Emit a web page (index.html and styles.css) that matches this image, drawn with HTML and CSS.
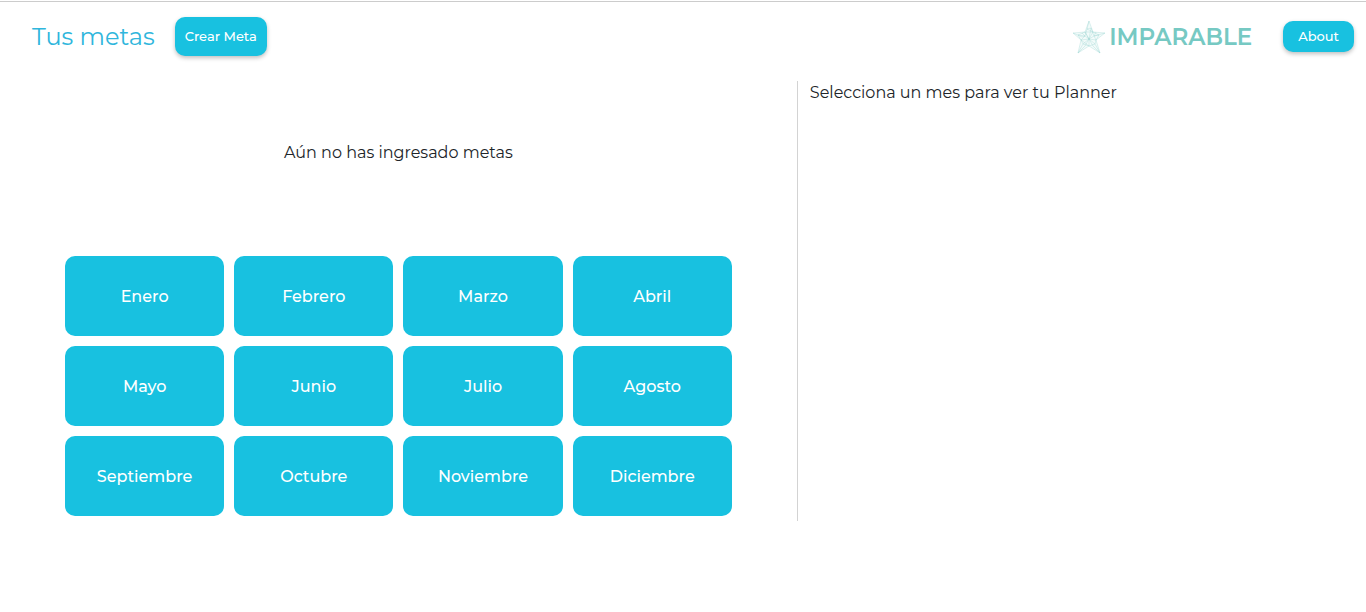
FILE: index.html
```html
<!DOCTYPE html>
<html lang="es">
<head>
<meta charset="utf-8">
<meta name="viewport" content="width=device-width, initial-scale=1">
<title>Tus metas</title>
<link rel="stylesheet" href="styles.css">
</head>
<body>
<header class="topbar">
  <h1 class="title">Tus metas</h1>
  <button class="button button-create" type="button">Crear Meta</button>
  <div class="brand">
    <svg class="brand-star" viewBox="0 0 34 34" aria-hidden="true">
      <path class="star-fill" d="M17 1 21 12 33 13 24 20 28 33 17 26 6 33 9 20 1 13 13 12Z"/>
      <path class="star-mesh" d="M17 1 21 12 33 13 24 20 28 33 17 26 6 33 9 20 1 13 13 12ZM17 1 15 9 21 12 13 12 17 19 21 12 27 15 24 20 17 19 17 26 9 20 17 19 13 12 6 15 9 20M1 13 6 15 13 16 17 19 22 16 33 13M6 33 11 24 17 19 23 24 28 33M11 24 9 20 13 16 15 9 19 8 17 19M11 24 17 26 23 24 24 20 22 16 19 8M6 33 13 26 17 19 21 26 28 33M10 13 13 16 10 17 6 15M27 15 22 16 24 12"/>
    </svg>
    <span class="brand-name">IMPARABLE</span>
  </div>
  <button class="button button-about" type="button">About</button>
</header>
<main class="board">
  <section class="goals">
    <p class="empty">Aún no has ingresado metas</p>
    <div class="months">
      <button class="month" type="button">Enero</button>
      <button class="month" type="button">Febrero</button>
      <button class="month" type="button">Marzo</button>
      <button class="month" type="button">Abril</button>
      <button class="month" type="button">Mayo</button>
      <button class="month" type="button">Junio</button>
      <button class="month" type="button">Julio</button>
      <button class="month" type="button">Agosto</button>
      <button class="month" type="button">Septiembre</button>
      <button class="month" type="button">Octubre</button>
      <button class="month" type="button">Noviembre</button>
      <button class="month" type="button">Diciembre</button>
    </div>
  </section>
  <section class="planner">
    <p class="hint">Selecciona un mes para ver tu Planner</p>
  </section>
</main>
</body>
</html>
```
FILE: styles.css
```css
* {
  box-sizing: border-box;
}

body {
  margin: 0;
  padding-top: 1px;
  background: #fff;
  color: #212529;
  font-family: Montserrat, Inter, sans-serif;
  font-size: 16px;
  line-height: 24px;
}

.topbar {
  display: flex;
  align-items: center;
  padding: 15px 12px 25px 32px;
  border-top: 1px solid #ccc;
}

.title {
  margin: 0 20px 0 0;
  color: #2fb6dc;
  font-size: 24px;
  font-weight: 400;
  line-height: 36px;
}

.button,
.month {
  border: 0;
  border-radius: 10px;
  background: #18c1e0;
  color: #fff;
  font-family: inherit;
  font-weight: 500;
  cursor: pointer;
}

.button {
  font-size: 13px;
  line-height: 19px;
  box-shadow: 0 2px 4px rgba(0, 0, 0, 0.25);
}

.button-create {
  padding: 10px;
}

.button-about {
  padding: 6px 15px;
}

.brand {
  display: flex;
  align-items: center;
  gap: 3px;
  margin-left: auto;
  margin-right: 31px;
}

.brand-star {
  width: 34px;
  height: 34px;
}

.star-fill {
  fill: #f3fbfa;
}

.star-mesh {
  fill: none;
  stroke: #8fd1cd;
  stroke-width: 0.3;
  stroke-linejoin: round;
}

.brand-name {
  color: #76c9c3;
  font-size: 23px;
  font-weight: 600;
}

.board {
  display: grid;
  grid-template-columns: 7fr 5fr;
}

.goals {
  padding: 60px 65px 5px;
}

.empty,
.hint {
  margin: 0;
}

.empty {
  margin-bottom: 91px;
  text-align: center;
}

.months {
  display: grid;
  grid-template-columns: repeat(4, 1fr);
  gap: 10px;
}

.month {
  height: 80px;
  font-size: 16px;
}

.planner {
  padding: 0 12px;
  border-left: 1px solid #d3d3d3;
}
```
